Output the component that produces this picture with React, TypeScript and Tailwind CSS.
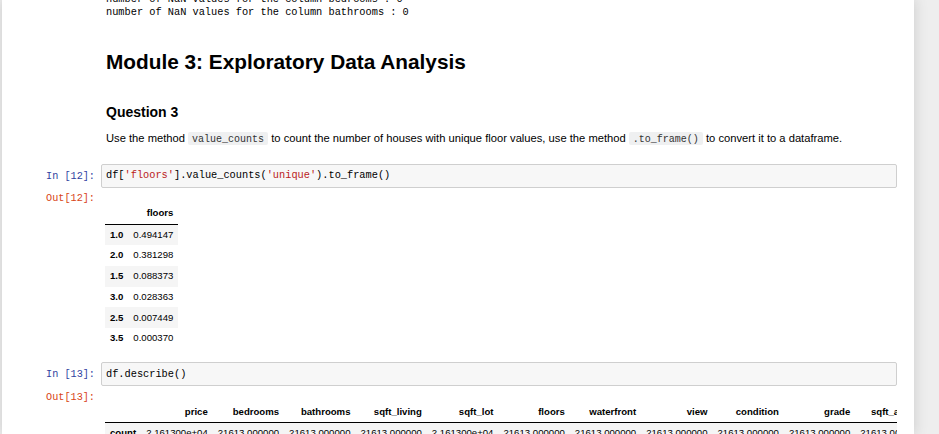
const mono = "font-['Liberation_Mono',monospace]";
const sans = "font-['Liberation_Sans',Arial,sans-serif]";

const floors = [
  ['1.0', '0.494147'],
  ['2.0', '0.381298'],
  ['1.5', '0.088373'],
  ['3.0', '0.028363'],
  ['2.5', '0.007449'],
  ['3.5', '0.000370'],
];

const descCols = [
  'price', 'bedrooms', 'bathrooms', 'sqft_living', 'sqft_lot', 'floors',
  'waterfront', 'view', 'condition', 'grade', 'sqft_above', 'sqft_basement',
];

const descRows: [string, string[]][] = [
  ['count', ['2.161300e+04', '21613.000000', '21613.000000', '21613.000000', '2.161300e+04', '21613.000000',
    '21613.000000', '21613.000000', '21613.000000', '21613.000000', '21613.000000', '21613.000000']],
  ['mean', ['5.400881e+05', '3.372870', '2.115736', '2079.899736', '1.510697e+04', '1.494309',
    '0.007542', '0.234303', '3.409430', '7.656873', '1788.390691', '291.509045']],
];

function Prompt({ label, out }: { label: string; out?: boolean }) {
  return (
    <div
      className={`w-[99px] shrink-0 pr-[6px] text-right text-[10.2px] leading-[13px] ${mono} ${
        out ? 'text-[#d84315]' : 'text-[#303f9f] pt-[6px]'
      }`}
    >
      {label}
    </div>
  );
}

function InputCell({ label, children, className = '' }: { label: string; children: React.ReactNode; className?: string }) {
  return (
    <div className={`flex ${className}`}>
      <Prompt label={label} />
      <div
        className={`mr-[17px] flex h-[24px] flex-1 items-center rounded-[2px] border border-[#cfcfcf] bg-[#f7f7f7] pl-[4px] text-[10.3px] leading-[13px] text-black ${mono}`}
      >
        {children}
      </div>
    </div>
  );
}

function Code({ children }: { children: React.ReactNode }) {
  return (
    <span className={`rounded-[2px] bg-[#eff0f1] px-[4px] pt-[2px] text-[10px] text-[#333] ${mono}`}>{children}</span>
  );
}

export default function App() {
  return (
    <div className="flex h-[434px] overflow-hidden bg-[#eeeeee]">
      <div className="ml-[2px] w-[912px] shrink-0 bg-white shadow-[0_0_12px_1px_rgba(87,87,87,0.2)]">
        {/* previous output */}
        <div className={`-mt-[7px] pl-[104px] text-[10.3px] leading-[13px] text-black ${mono}`}>
          <div>number of NaN values for the column bedrooms : 0</div>
          <div>number of NaN values for the column bathrooms : 0</div>
        </div>

        <h1 className={`mt-[31px] pl-[104px] text-[20.8px] font-bold leading-[24px] text-black ${sans}`}>
          Module 3: Exploratory Data Analysis
        </h1>

        <h3 className={`mt-[31px] pl-[104px] text-[14px] font-bold leading-[14px] text-black ${sans}`}>Question 3</h3>

        <p className={`mt-[12.4px] pl-[104px] text-[11.2px] leading-[15px] text-black ${sans}`}>
          Use the method <Code>value_counts</Code> to count the number of houses with unique floor values, use the method{' '}
          <Code>.to_frame()</Code> to convert it to a dataframe.
        </p>

        <InputCell label="In [12]:" className="mt-[16.6px]">
          <span>df[</span>
          <span className="text-[#ba2121]">'floors'</span>
          <span>].value_counts(</span>
          <span className="text-[#ba2121]">'unique'</span>
          <span>).to_frame()</span>
        </InputCell>

        <div className="mt-[4.5px] flex">
          <Prompt label="Out[12]:" out />
          <div className={`flex-1 pl-[4px] pt-[11px] ${sans}`}>
            <table className="border-collapse text-[9.6px] text-black">
              <thead>
                <tr className="h-[20.8px]">
                  <th className="border-b border-black px-[5px]" />
                  <th className="border-b border-black px-[5px] text-right font-bold">floors</th>
                </tr>
              </thead>
              <tbody>
                {floors.map(([k, v], i) => (
                  <tr key={k} className={`h-[20.8px] ${i % 2 === 0 ? 'bg-[#f5f5f5]' : ''}`}>
                    <th className="px-[5px] text-right font-bold">{k}</th>
                    <td className="px-[5px] text-right">{v}</td>
                  </tr>
                ))}
              </tbody>
            </table>
          </div>
        </div>

        <InputCell label="In [13]:" className="mt-[13.2px]">
          <span>df.describe()</span>
        </InputCell>

        <div className="mt-[5.2px] flex">
          <Prompt label="Out[13]:" out />
          <div className={`mr-[17px] flex-1 overflow-hidden pl-[4px] pt-[10.2px] ${sans}`}>
            <table className="border-collapse whitespace-nowrap text-[9.6px] text-black">
              <thead>
                <tr className="h-[20.8px]">
                  <th className="border-b border-black px-[5px]" />
                  {descCols.map((c) => (
                    <th key={c} className="border-b border-black px-[5px] text-right font-bold">
                      {c}
                    </th>
                  ))}
                </tr>
              </thead>
              <tbody>
                {descRows.map(([k, vals], i) => (
                  <tr key={k} className={`h-[20.8px] ${i % 2 === 0 ? 'bg-[#f5f5f5]' : ''}`}>
                    <th className="px-[5px] text-right font-bold">{k}</th>
                    {vals.map((v, j) => (
                      <td key={j} className="px-[5px] text-right">
                        {v}
                      </td>
                    ))}
                  </tr>
                ))}
              </tbody>
            </table>
          </div>
        </div>
      </div>
    </div>
  );
}
